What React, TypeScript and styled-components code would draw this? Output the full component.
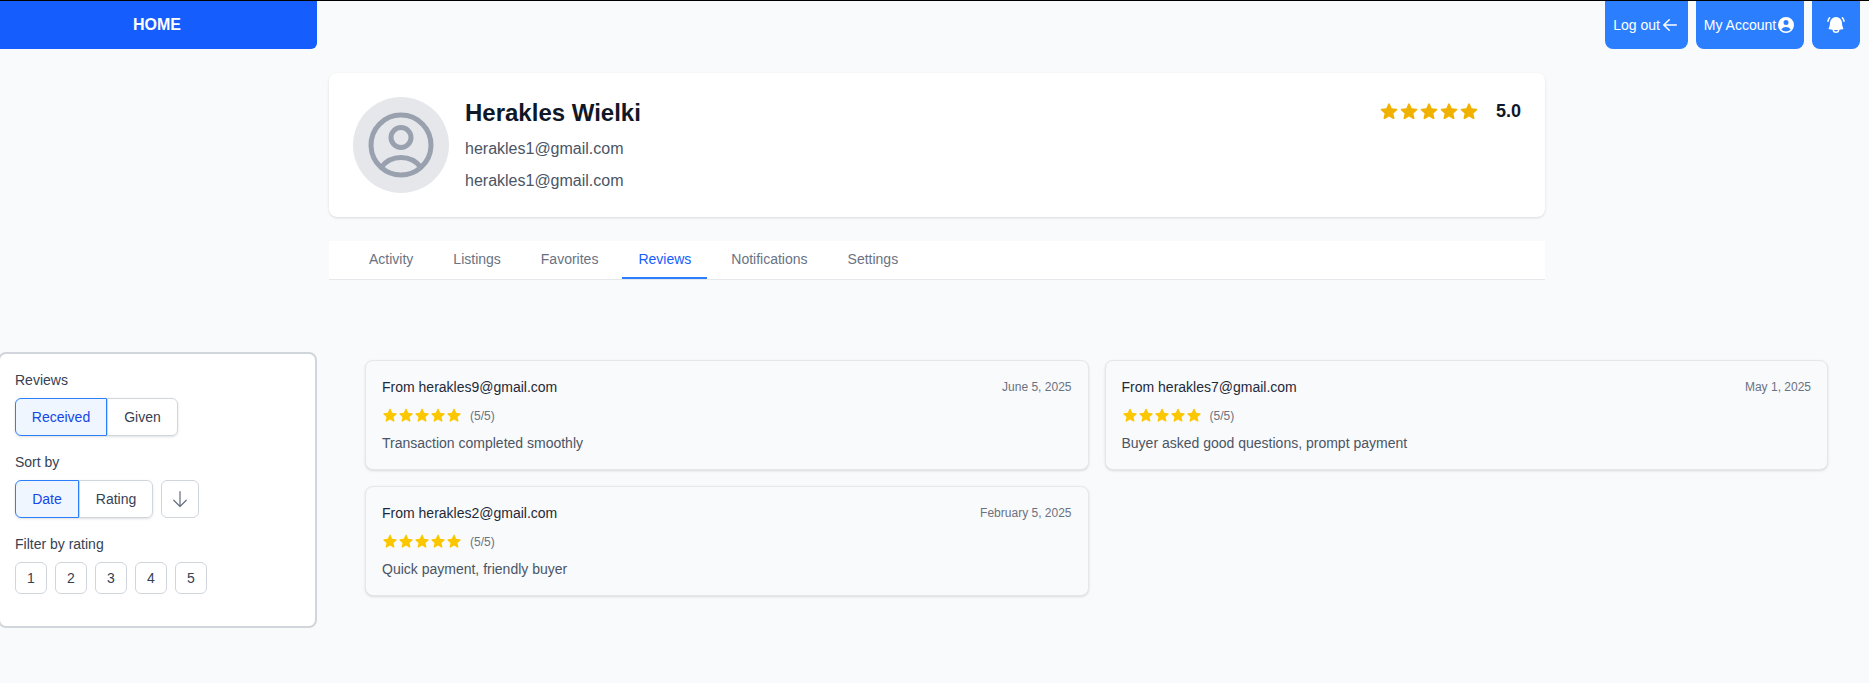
import React from 'react';
import styled, { createGlobalStyle, css } from 'styled-components';
import { HiOutlineArrowDown, HiOutlineUserCircle } from 'react-icons/hi2';

const GlobalStyle = createGlobalStyle`
  *, *::before, *::after { box-sizing: border-box; }
  body {
    margin: 0;
    background: #f9fafb;
    color: #101828;
    font-family: "Liberation Sans", Arial, sans-serif;
    font-size: 14px;
    line-height: 20px;
    overflow: hidden;
  }
  h1, p { margin: 0; }
  button { font: inherit; margin: 0; cursor: pointer; }
  svg { display: block; flex: none; }
`;

const Page = styled.div`
  height: 683px;
  border-top: 1px solid #000;
  display: grid;
  grid-template-columns: 317px 1fr;
  grid-template-rows: 48px auto 1fr;
`;

const HomeButton = styled.button`
  border: 0;
  border-radius: 0 0 6px 0;
  background: #155dfc;
  color: #fff;
  font-size: 16px;
  font-weight: 700;
  padding: 0 3px 0 0;
`;

const TopActions = styled.nav`
  display: flex;
  justify-content: flex-end;
  gap: 8px;
  padding-right: 9px;
`;

const ActionButton = styled.button<{ $width: number }>`
  width: ${(p) => p.$width}px;
  display: flex;
  align-items: center;
  justify-content: center;
  border: 0;
  border-radius: 0 0 8px 8px;
  background: #2b7fff;
  color: #fff;
  padding: 0;
  white-space: nowrap;
`;

const Profile = styled.section`
  grid-column: 2;
  width: 1216px;
  margin: 24px 0 0 12px;
`;

const ProfileCard = styled.div`
  height: 144px;
  display: flex;
  gap: 16px;
  padding: 24px;
  border-radius: 8px;
  background: #fff;
  box-shadow: 0 1px 3px rgba(0, 0, 0, 0.1), 0 1px 2px -1px rgba(0, 0, 0, 0.1);
`;

const Avatar = styled.div`
  width: 96px;
  height: 96px;
  display: flex;
  align-items: center;
  justify-content: center;
  border-radius: 50%;
  background: #e5e7eb;
  color: #99a1af;
`;

const Identity = styled.div`
  flex: 1;
  display: flex;
  flex-direction: column;
  gap: 8px;
`;

const Name = styled.h1`
  font-size: 24px;
  line-height: 32px;
  font-weight: 700;
`;

const Email = styled.p`
  font-size: 16px;
  line-height: 24px;
  color: #4a5565;
`;

const Score = styled.div`
  height: 28px;
  display: flex;
  align-items: center;
  font-size: 18px;
  font-weight: 700;
  gap: 17px;
`;

const Stars = styled.span<{ $color: string }>`
  display: flex;
  color: ${(p) => p.$color};
`;

const Tabs = styled.nav`
  height: 39px;
  display: flex;
  gap: 8px;
  margin-top: 24px;
  padding-left: 24px;
  border-bottom: 1px solid #e5e7eb;
  background: #fff;
`;

const Tab = styled.button<{ $active: boolean }>`
  height: 38px;
  padding: 0 16px;
  border: 0;
  border-bottom: 2px solid ${(p) => (p.$active ? '#2b7fff' : 'transparent')};
  background: none;
  color: ${(p) => (p.$active ? '#155dfc' : '#6a7282')};
`;

const Filters = styled.aside`
  grid-column: 1;
  height: 276px;
  margin: 72px 0 0 -2px;
  width: 319px;
  padding: 16px 15px;
  border: 2px solid #d1d5dc;
  border-radius: 8px;
  background: #fff;
  color: #364153;
`;

const FilterGroup = styled.div`
  margin-bottom: 16px;
`;

const FilterLabel = styled.p`
  margin-bottom: 8px;
`;

const Controls = styled.div`
  display: flex;
  gap: 8px;
`;

const Segments = styled.div`
  display: flex;
  border-radius: 6px;
  box-shadow: 0 1px 3px rgba(0, 0, 0, 0.1), 0 1px 2px -1px rgba(0, 0, 0, 0.1);
`;

const Segment = styled.button<{ $active: boolean; $width: number }>`
  width: ${(p) => p.$width}px;
  height: 38px;
  padding: 0;
  border: 1px solid #d1d5dc;
  background: #fff;
  color: #364153;
  &:first-child { border-radius: 6px 0 0 6px; }
  &:last-child { border-radius: 0 6px 6px 0; }
  ${(p) => p.$active && css`
    border-color: #2b7fff;
    background: #eff6ff;
    color: #1447e6;
  `}
`;

const SquareButton = styled.button<{ $size: number }>`
  width: ${(p) => p.$size}px;
  height: ${(p) => p.$size}px;
  display: flex;
  align-items: center;
  justify-content: center;
  padding: 0;
  border: 1px solid #d1d5dc;
  border-radius: 6px;
  background: #fff;
  color: ${(p) => (p.$size > 32 ? '#6a7282' : '#364153')};
`;

const ReviewGrid = styled.main`
  display: grid;
  grid-template-columns: 1fr 1fr;
  grid-auto-rows: 110px;
  gap: 16px;
  margin: 80px 41px 0 48px;
`;

const ReviewCard = styled.article`
  padding: 16px;
  border: 1px solid #e5e7eb;
  border-radius: 8px;
  background: #f9fafb;
  box-shadow: 0 1px 3px rgba(0, 0, 0, 0.1), 0 1px 2px -1px rgba(0, 0, 0, 0.1);
`;

const ReviewHead = styled.header`
  display: flex;
  justify-content: space-between;
  color: #1e2939;
`;

const Small = styled.span`
  font-size: 12px;
  color: #6a7282;
`;

const Rating = styled.div`
  height: 20px;
  display: flex;
  align-items: center;
  gap: 8px;
  margin: 9px 0 7px;

  ${Stars} { padding-bottom: 2px; }
`;

const Comment = styled.p`
  color: #4a5565;
`;

const icons = {
  arrowLeft: 'M17 10a.75.75 0 0 1-.75.75H5.612l4.158 3.96a.75.75 0 1 1-1.04 1.08l-5.5-5.25a.75.75 0 0 1 0-1.08l5.5-5.25a.75.75 0 1 1 1.04 1.08L5.612 9.25H16.25A.75.75 0 0 1 17 10Z',
  userCircle: 'M18 10a8 8 0 1 1-16 0 8 8 0 0 1 16 0Zm-5.5-2.5a2.5 2.5 0 1 1-5 0 2.5 2.5 0 0 1 5 0ZM10 12a5.99 5.99 0 0 0-4.793 2.39A6.483 6.483 0 0 0 10 16.5a6.483 6.483 0 0 0 4.793-2.11A5.99 5.99 0 0 0 10 12Z',
  bellAlert: 'M4.214 3.227a.75.75 0 0 0-1.156-.955 8.97 8.97 0 0 0-1.856 3.825.75.75 0 0 0 1.466.316 7.47 7.47 0 0 1 1.546-3.186ZM16.942 2.272a.75.75 0 0 0-1.157.955 7.47 7.47 0 0 1 1.547 3.186.75.75 0 0 0 1.466-.316 8.971 8.971 0 0 0-1.856-3.825ZM10 2a6 6 0 0 0-6 6c0 1.887-.454 3.665-1.257 5.234a.75.75 0 0 0 .515 1.076 32.91 32.91 0 0 0 3.256.508 3.5 3.5 0 0 0 6.972 0 32.903 32.903 0 0 0 3.256-.508.75.75 0 0 0 .515-1.076A11.448 11.448 0 0 1 16 8a6 6 0 0 0-6-6Zm0 14.5a2 2 0 0 1-1.95-1.557 33.54 33.54 0 0 0 3.9 0A2 2 0 0 1 10 16.5Z',
  star: 'M10.868 2.884c-.321-.772-1.415-.772-1.736 0l-1.83 4.401-4.753.381c-.833.067-1.171 1.107-.536 1.651l3.62 3.102-1.106 4.637c-.194.813.691 1.456 1.405 1.02L10 15.591l4.069 2.485c.713.436 1.598-.207 1.404-1.02l-1.106-4.637 3.62-3.102c.635-.544.297-1.584-.536-1.65l-4.752-.382-1.831-4.401Z',
};

function Icon({ name, size = 20 }: { name: keyof typeof icons; size?: number }) {
  return (
    <svg viewBox="0 0 20 20" width={size} height={size} fill="currentColor" aria-hidden="true">
      <path fillRule="evenodd" clipRule="evenodd" d={icons[name]} />
    </svg>
  );
}

function StarRow({ size, color }: { size: number; color: string }) {
  return (
    <Stars $color={color}>
      {[1, 2, 3, 4, 5].map((n) => <Icon key={n} name="star" size={size} />)}
    </Stars>
  );
}

const tabs = ['Activity', 'Listings', 'Favorites', 'Reviews', 'Notifications', 'Settings'];

const reviews = [
  { from: 'herakles9@gmail.com', date: 'June 5, 2025', text: 'Transaction completed smoothly' },
  { from: 'herakles7@gmail.com', date: 'May 1, 2025', text: 'Buyer asked good questions, prompt payment' },
  { from: 'herakles2@gmail.com', date: 'February 5, 2025', text: 'Quick payment, friendly buyer' },
];

export default function App() {
  return (
    <>
      <GlobalStyle />
      <Page>
        <HomeButton>HOME</HomeButton>
        <TopActions>
          <ActionButton $width={83}>Log out<Icon name="arrowLeft" /></ActionButton>
          <ActionButton $width={108}>My Account<Icon name="userCircle" /></ActionButton>
          <ActionButton $width={48} aria-label="Notifications"><Icon name="bellAlert" /></ActionButton>
        </TopActions>
        <Profile>
          <ProfileCard>
            <Avatar><HiOutlineUserCircle size={80} /></Avatar>
            <Identity>
              <Name>Herakles Wielki</Name>
              <Email>herakles1@gmail.com</Email>
              <Email>herakles1@gmail.com</Email>
            </Identity>
            <Score><StarRow size={20} color="#f0b100" />5.0</Score>
          </ProfileCard>
          <Tabs>
            {tabs.map((t) => <Tab key={t} $active={t === 'Reviews'}>{t}</Tab>)}
          </Tabs>
        </Profile>
        <Filters>
          <FilterGroup>
            <FilterLabel>Reviews</FilterLabel>
            <Controls>
              <Segments>
                <Segment $active $width={92}>Received</Segment>
                <Segment $active={false} $width={71}>Given</Segment>
              </Segments>
            </Controls>
          </FilterGroup>
          <FilterGroup>
            <FilterLabel>Sort by</FilterLabel>
            <Controls>
              <Segments>
                <Segment $active $width={64}>Date</Segment>
                <Segment $active={false} $width={74}>Rating</Segment>
              </Segments>
              <SquareButton $size={38} aria-label="Descending"><HiOutlineArrowDown size={20} /></SquareButton>
            </Controls>
          </FilterGroup>
          <FilterGroup>
            <FilterLabel>Filter by rating</FilterLabel>
            <Controls>
              {[1, 2, 3, 4, 5].map((n) => <SquareButton key={n} $size={32}>{n}</SquareButton>)}
            </Controls>
          </FilterGroup>
        </Filters>
        <ReviewGrid>
          {reviews.map((r) => (
            <ReviewCard key={r.from}>
              <ReviewHead>
                <span>From {r.from}</span>
                <Small>{r.date}</Small>
              </ReviewHead>
              <Rating>
                <StarRow size={16} color="#fdc700" />
                <Small>(5/5)</Small>
              </Rating>
              <Comment>{r.text}</Comment>
            </ReviewCard>
          ))}
        </ReviewGrid>
      </Page>
    </>
  );
}
